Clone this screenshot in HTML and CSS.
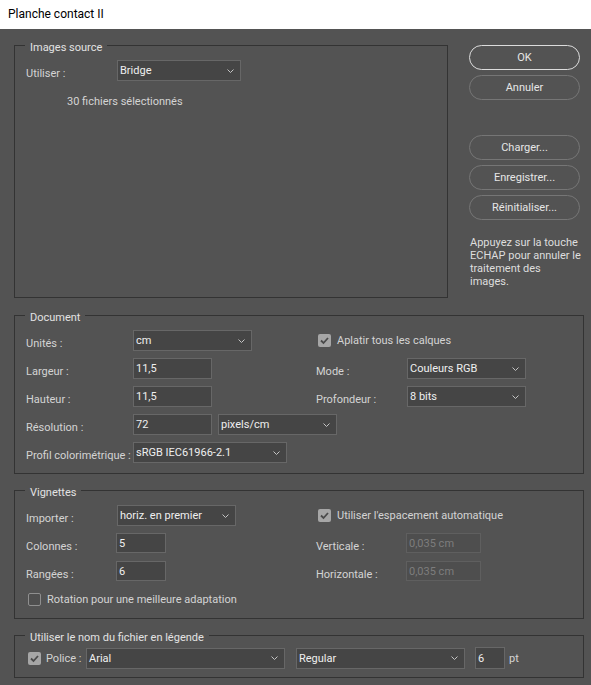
FILE: index.html
```html
<!DOCTYPE html>
<html lang="fr">
<head>
<meta charset="utf-8">
<title>Planche contact II</title>
<link rel="stylesheet" href="styles.css">
</head>
<body>
<div class="titlebar">Planche contact II</div>
<div class="content">
  <div class="top">
    <div class="group g-source">
      <div class="legend">Images source</div>
      <div class="rows">
        <div class="cell">
          <span class="lbl w91">Utiliser :</span>
          <div class="field select w124"><span>Bridge</span><svg class="chev" viewBox="0 0 7 4" width="7" height="4"><polyline points="0.5,0.5 3.5,3.5 6.5,0.5"/></svg></div>
        </div>
        <div class="note">30 fichiers sélectionnés</div>
      </div>
    </div>
    <div class="side">
      <div class="btn primary">OK</div>
      <div class="btn">Annuler</div>
      <div class="btn spaced">Charger...</div>
      <div class="btn">Enregistrer...</div>
      <div class="btn">Réinitialiser...</div>
      <p class="help">Appuyez sur la touche<br>ECHAP pour annuler le<br>traitement des<br>images.</p>
    </div>
  </div>

  <div class="group wide g-doc">
    <div class="legend">Document</div>
    <div class="grid2">
      <div class="cell">
        <span class="lbl w107">Unités :</span>
        <div class="field select w119"><span>cm</span><svg class="chev" viewBox="0 0 7 4" width="7" height="4"><polyline points="0.5,0.5 3.5,3.5 6.5,0.5"/></svg></div>
      </div>
      <div class="cell center">
        <span class="cb on"><svg viewBox="0 0 13 13" width="13" height="13"><polyline points="3,6.5 5.5,9 10,4"/></svg></span>
        <span class="cbtext">Aplatir tous les calques</span>
      </div>

      <div class="cell">
        <span class="lbl w107">Largeur :</span>
        <div class="field w79"><span>11,5</span></div>
      </div>
      <div class="cell">
        <span class="lbl w91">Mode :</span>
        <div class="field select w119"><span>Couleurs RGB</span><svg class="chev" viewBox="0 0 7 4" width="7" height="4"><polyline points="0.5,0.5 3.5,3.5 6.5,0.5"/></svg></div>
      </div>

      <div class="cell">
        <span class="lbl w107">Hauteur :</span>
        <div class="field w79"><span>11,5</span></div>
      </div>
      <div class="cell">
        <span class="lbl w91">Profondeur :</span>
        <div class="field select w119"><span>8 bits</span><svg class="chev" viewBox="0 0 7 4" width="7" height="4"><polyline points="0.5,0.5 3.5,3.5 6.5,0.5"/></svg></div>
      </div>

      <div class="cell">
        <span class="lbl w107">Résolution :</span>
        <div class="field w79"><span>72</span></div>
        <div class="field select w119 ml6"><span>pixels/cm</span><svg class="chev" viewBox="0 0 7 4" width="7" height="4"><polyline points="0.5,0.5 3.5,3.5 6.5,0.5"/></svg></div>
      </div>
      <div class="cell"></div>

      <div class="cell">
        <span class="lbl w107">Profil colorimétrique :</span>
        <div class="field select w154"><span>sRGB IEC61966-2.1</span><svg class="chev" viewBox="0 0 7 4" width="7" height="4"><polyline points="0.5,0.5 3.5,3.5 6.5,0.5"/></svg></div>
      </div>
      <div class="cell"></div>
    </div>
  </div>

  <div class="group wide g-vig">
    <div class="legend">Vignettes</div>
    <div class="grid2">
      <div class="cell">
        <span class="lbl w91">Importer :</span>
        <div class="field select w119"><span>horiz. en premier</span><svg class="chev" viewBox="0 0 7 4" width="7" height="4"><polyline points="0.5,0.5 3.5,3.5 6.5,0.5"/></svg></div>
      </div>
      <div class="cell center">
        <span class="cb on"><svg viewBox="0 0 13 13" width="13" height="13"><polyline points="3,6.5 5.5,9 10,4"/></svg></span>
        <span class="cbtext">Utiliser l'espacement automatique</span>
      </div>

      <div class="cell">
        <span class="lbl w90">Colonnes :</span>
        <div class="field w50 tall"><span>5</span></div>
      </div>
      <div class="cell">
        <span class="lbl w90">Verticale :</span>
        <div class="field disabled w75 tall"><span>0,035 cm</span></div>
      </div>

      <div class="cell">
        <span class="lbl w90">Rangées :</span>
        <div class="field w50 tall"><span>6</span></div>
      </div>
      <div class="cell">
        <span class="lbl w90">Horizontale :</span>
        <div class="field disabled w75 tall"><span>0,035 cm</span></div>
      </div>

      <div class="cell center span2">
        <span class="cb"></span>
        <span class="cbtext">Rotation pour une meilleure adaptation</span>
      </div>
    </div>
  </div>

  <div class="group wide g-leg">
    <div class="legend">Utiliser le nom du fichier en légende</div>
    <div class="legrow">
      <span class="cb on"><svg viewBox="0 0 13 13" width="13" height="13"><polyline points="3,6.5 5.5,9 10,4"/></svg></span>
      <span class="cbtext w40">Police :</span>
      <div class="field select w199"><span>Arial</span><svg class="chev" viewBox="0 0 7 4" width="7" height="4"><polyline points="0.5,0.5 3.5,3.5 6.5,0.5"/></svg></div>
      <div class="field select w169 ml11"><span>Regular</span><svg class="chev" viewBox="0 0 7 4" width="7" height="4"><polyline points="0.5,0.5 3.5,3.5 6.5,0.5"/></svg></div>
      <div class="field w30 ml10 h22"><span>6</span></div>
      <span class="unit">pt</span>
    </div>
  </div>
</div>
</body>
</html>
```

FILE: styles.css
```css
body {
  margin: 0;
  background: #535353;
  font-family: Roboto, "Liberation Sans", Arial, sans-serif;
  font-size: 11px;
  color: #d4d4d4;
}

.titlebar {
  height: 29px;
  background: #ffffff;
  color: #000000;
  font-size: 12px;
  line-height: 29px;
  padding-left: 8px;
}

.content {
  padding: 16px 0 0 14px;
}

.top {
  display: flex;
  align-items: flex-start;
  gap: 21px;
}

.group {
  box-sizing: border-box;
  border: 1px solid #333333;
}

.legend {
  display: table;
  margin: -6px 0 0 10px;
  padding: 0 5px;
  background: #535353;
  line-height: 15px;
  color: #e2e2e2;
}

.g-source {
  width: 434px;
  height: 253px;
}

.wide {
  width: 570px;
  margin-top: 16px;
}

.g-doc {
  margin-top: 17px;
}

.rows {
  padding: 5px 0 0 11px;
}

.note {
  margin: 13px 0 0 41px;
  line-height: 15px;
}

.grid2 {
  display: grid;
  grid-template-columns: 290px 1fr;
  grid-auto-rows: 21px;
  row-gap: 7px;
  padding: 5px 0 10px 11px;
}

.g-vig .grid2 {
  padding-bottom: 8px;
}

.span2 {
  grid-column: 1 / 3;
}

.cell {
  display: flex;
  align-items: flex-start;
}

.cell.center {
  align-items: center;
}

.lbl {
  flex: none;
  padding-top: 6px;
  line-height: 15px;
}

.w90 { width: 90px; }
.w91 { width: 91px; }
.w107 { width: 107px; }
.w40 { width: 40px; }
.w30 { width: 30px; }
.w50 { width: 50px; }
.w75 { width: 75px; }
.w79 { width: 79px; }
.w119 { width: 119px; }
.w124 { width: 124px; }
.w154 { width: 154px; }
.w169 { width: 169px; }
.w199 { width: 199px; }
.ml6 { margin-left: 6px; }
.ml10 { margin-left: 10px; }
.ml11 { margin-left: 11px; }

.field {
  flex: none;
  box-sizing: border-box;
  height: 21px;
  display: flex;
  align-items: center;
  border: 1px solid #676767;
  background: #454545;
  color: #efefef;
  padding: 0 2px;
  line-height: 15px;
  white-space: nowrap;
  overflow: hidden;
}

.field.tall {
  height: 20px;
}

.field.h22 {
  height: 22px;
}

.field.disabled {
  background: #4e4e4e;
  border-color: #5f5f5f;
  color: #7d7d7d;
}

.chev {
  margin-left: auto;
  margin-right: 4px;
  flex: none;
}

.chev polyline {
  fill: none;
  stroke: #c4c4c4;
  stroke-width: 1;
}

.cb {
  flex: none;
  box-sizing: border-box;
  width: 13px;
  height: 13px;
  margin-left: 2px;
  border-radius: 2px;
  border: 1px solid #8f8f8f;
  background: #4f4f4f;
}

.cb.on {
  border: none;
  background: #a6a6a6;
}

.cb svg {
  display: block;
}

.cb polyline {
  fill: none;
  stroke: #4a4a4a;
  stroke-width: 1.8;
}

.cbtext {
  margin-left: 6px;
  line-height: 15px;
  flex: none;
}

.legrow {
  display: flex;
  align-items: center;
  height: 22px;
  margin-top: 2px;
  padding: 0 0 8px 11px;
}

.legrow .cbtext {
  margin-left: 5px;
}

.unit {
  margin-left: 4px;
  line-height: 15px;
}

.side {
  width: 111px;
  display: flex;
  flex-direction: column;
  gap: 5px;
}

.btn {
  box-sizing: border-box;
  height: 25px;
  border: 1px solid #767676;
  border-radius: 13px;
  display: flex;
  align-items: center;
  justify-content: center;
  color: #e6e6e6;
}

.btn.primary {
  border-color: #dcdcdc;
}

.btn.spaced {
  margin-top: 30px;
}

.help {
  margin: 11px 0 0 1px;
  line-height: 13px;
  color: #dedede;
  white-space: nowrap;
}
```
